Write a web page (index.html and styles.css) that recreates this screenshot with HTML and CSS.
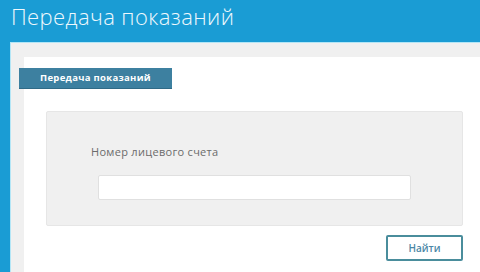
FILE: index.html
```html
<!DOCTYPE html>
<html lang="ru">
<head>
<meta charset="utf-8">
<title>Передача показаний</title>
<link rel="stylesheet" href="styles.css">
</head>
<body>
<header class="topbar">
  <h1 class="title">Передача показаний</h1>
</header>
<main class="frame">
  <div class="sheet">
    <div class="tab">Передача показаний</div>
    <section class="panel">
      <label class="label" for="acc">Номер лицевого счета</label>
      <input class="field" id="acc" type="text">
    </section>
    <div class="actions">
      <button class="btn" type="button">Найти</button>
    </div>
  </div>
</main>
</body>
</html>
```
FILE: styles.css
```css
html, body {
  margin: 0;
  padding: 0;
  height: 100%;
}
body {
  background: #1a9cd4;
  font-family: "Open Sans", "Liberation Sans", sans-serif;
  overflow: hidden;
}
.topbar {
  height: 42px;
  box-sizing: border-box;
  padding: 1px 0 0 11px;
}
.title {
  margin: 0;
  color: #eef8fd;
  font-weight: 300;
  font-size: 22px;
  line-height: 30px;
  letter-spacing: 0.4px;
}
.frame {
  margin-left: 10px;
  height: calc(100% - 42px);
  box-sizing: border-box;
  border-top: 1px solid #b4e6f6;
  border-left: 1px solid #b4e6f6;
  background: #f0f0f0;
  padding: 14px 0 0 13px;
}
.sheet {
  background: #ffffff;
  height: 100%;
  padding-top: 11px;
  box-sizing: border-box;
}
.tab {
  margin-left: -5px;
  width: 153px;
  height: 21px;
  background: #3d80a0;
  border-bottom: 1px solid #2f6a86;
  box-sizing: border-box;
  color: #fff;
  font-weight: 700;
  font-size: 9.5px;
  line-height: 20px;
  text-align: center;
  letter-spacing: 0.3px;
}
.panel {
  margin: 22px 0 0 22px;
  width: 417px;
  height: 115px;
  box-sizing: border-box;
  background: #f0f0f0;
  border: 1px solid #e6e6e6;
  border-radius: 2px;
  padding: 33px 0 0 44px;
  display: flex;
  flex-direction: column;
  align-items: flex-start;
}
.label {
  color: #6b6b6b;
  font-size: 11px;
  line-height: 14px;
  letter-spacing: 0.3px;
}
.field {
  margin: 16px 0 0 7px;
  width: 313px;
  height: 25px;
  box-sizing: border-box;
  border: 1px solid #e0e0e0;
  border-radius: 2px;
  background: #fff;
  outline: none;
  padding: 0 6px;
}
.actions {
  width: 439px;
  display: flex;
  justify-content: flex-end;
  margin-top: 9px;
}
.btn {
  width: 77px;
  height: 26px;
  box-sizing: border-box;
  background: #fff;
  border: 2px solid #4a8d9c;
  border-radius: 2px;
  color: #4a86a6;
  font-family: "Open Sans", "Liberation Sans", sans-serif;
  font-size: 10px;
  font-weight: 600;
  padding: 0;
}
```
